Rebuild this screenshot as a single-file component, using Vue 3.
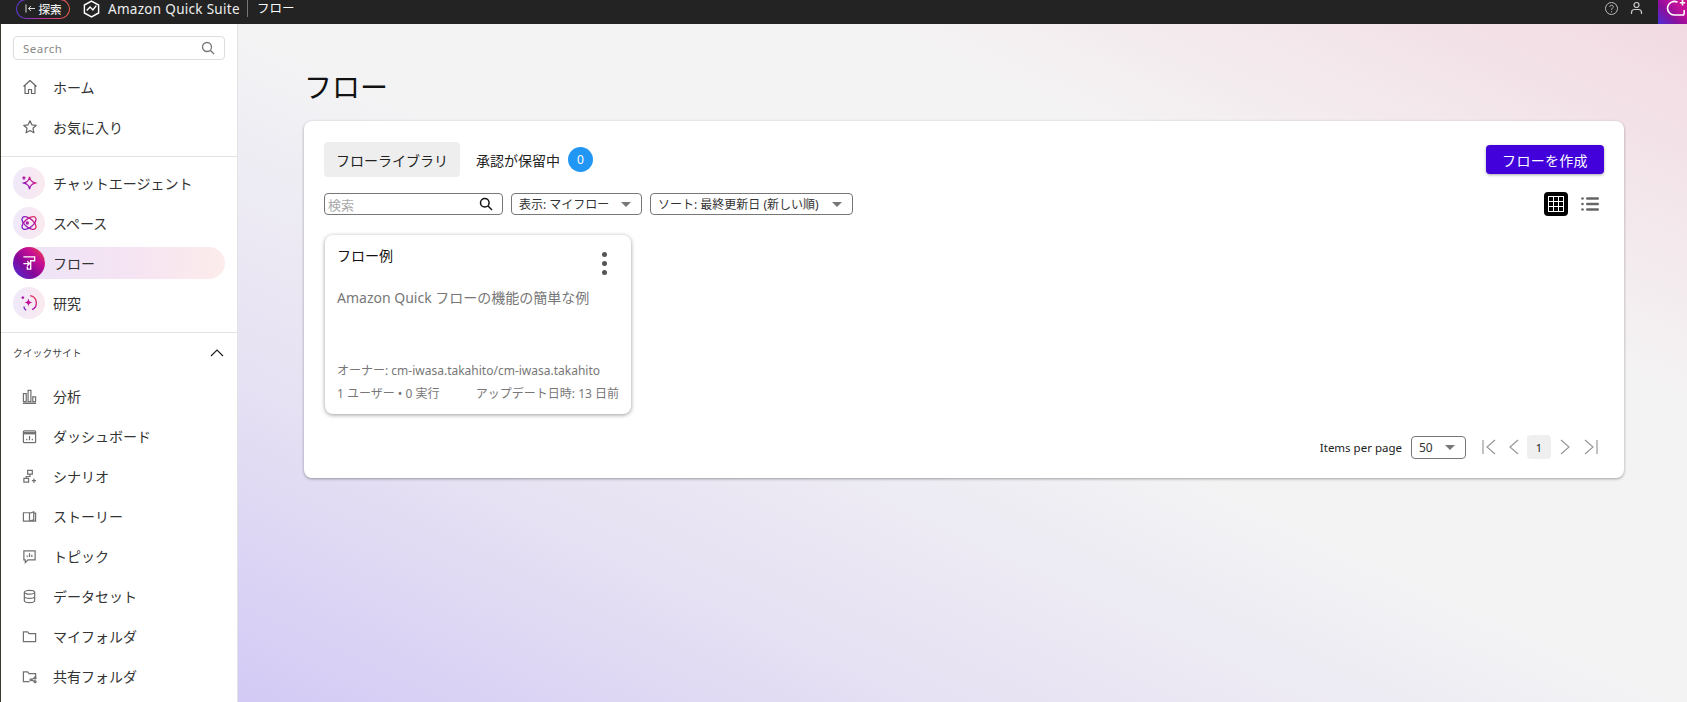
<script setup>
import { ref } from "vue";

const top = ref([
  { label: "ホーム", icon: "home" },
  { label: "お気に入り", icon: "star" },
]);
const agents = ref([
  { label: "チャットエージェント", icon: "chat" },
  { label: "スペース", icon: "space" },
  { label: "フロー", icon: "flow", active: true },
  { label: "研究", icon: "research" },
]);
const quick = ref([
  { label: "分析", icon: "analysis" },
  { label: "ダッシュボード", icon: "dashboard" },
  { label: "シナリオ", icon: "scenario" },
  { label: "ストーリー", icon: "story" },
  { label: "トピック", icon: "topic" },
  { label: "データセット", icon: "dataset" },
  { label: "マイフォルダ", icon: "folder" },
  { label: "共有フォルダ", icon: "shared" },
]);
</script>

<template>
  <div class="page">
    <header class="topbar">
      <button class="explore">
        <svg width="11" height="9" viewBox="0 0 11 9" fill="none" stroke="#ddd" stroke-width="1">
          <path d="M1 0.5v8M10 4.500H3.500M6 2L3.500 4.500L6 7" />
        </svg>
        <span>探索</span>
      </button>
      <svg class="logo" width="19" height="18" viewBox="0 0 19 19" fill="none" stroke="#fff" stroke-width="1.500">
        <path d="M9.500 1.200L17 5.300v8.400l-7.500 4.100L2 13.700V5.300z" />
        <path d="M4.500 11l3.500-3.500 3 3 3.500-4.500" />
      </svg>
      <span class="brand">Amazon Quick Suite</span>
      <span class="crumb">フロー</span>
      <div class="spacer"></div>
      <svg class="top-icon" width="15" height="15" viewBox="0 0 15 15" fill="none" stroke="#bbb" stroke-width="1">
        <circle cx="7.500" cy="7.500" r="6" />
        <path d="M5.800 6c0-2.300 3.500-2.300 3.500-.2 0 1.400-1.800 1.300-1.800 3M7.500 10.300v1" />
      </svg>
      <svg class="top-icon user" width="15" height="15" viewBox="0 0 15 15" fill="none" stroke="#ccc" stroke-width="1.200">
        <circle cx="7.500" cy="4" r="2.500" />
        <path d="M2.500 13v-1.500c0-2 1.500-3 3-3h4c1.500 0 3 1 3 3V13" />
      </svg>
      <div class="assistant">
        <svg width="21" height="18" viewBox="0 0 21 18" fill="none" stroke="#fff" stroke-width="1.600">
          <path d="M11.500 2.200A6.800 6.800 0 1 0 9 15h8.500" />
          <path d="M17.500 15.500c.8-1.800 1-3.500.6-5.500" />
          <path d="M16.500 0v5.500M13.800 2.700h5.400" />
        </svg>
      </div>
    </header>

    <div class="body">
      <aside class="sidebar">
        <div class="side-search">
          <span>Search</span>
          <svg width="14" height="14" viewBox="0 0 14 14" fill="none" stroke="#777" stroke-width="1.300">
            <circle cx="6" cy="6" r="4.500" />
            <path d="M9.300 9.300L13 13" />
          </svg>
        </div>

        <nav class="nav-top">
          <a v-for="item in top" :key="item.label" class="nav-item">
            <span class="nav-icon">
              <svg width="16" height="16" viewBox="0 0 16 16" fill="none" stroke="#666" stroke-width="1.200" stroke-linejoin="round">
                <path v-if="item.icon === 'home'" d="M1.500 7.500L8 1.500l6.500 6M3 6.500v8h3.500v-4h3v4H13v-8" />
                <path v-else d="M8 1.800l1.900 4 4.400.5-3.300 3 .9 4.400L8 11.500l-3.900 2.200.9-4.400-3.300-3 4.400-.5z" />
              </svg>
            </span>
            <span>{{ item.label }}</span>
          </a>
        </nav>

        <nav class="nav-agents">
          <a v-for="item in agents" :key="item.label" class="agent-item" :class="{ active: item.active }">
            <span class="agent-icon">
              <svg width="18" height="18" viewBox="0 0 16 16" fill="none" :stroke="item.active ? '#fff' : 'url(#iconGrad)'" stroke-width="1.200">
                <defs>
                  <linearGradient id="iconGrad" gradientUnits="userSpaceOnUse" x1="1" y1="15" x2="15" y2="1">
                    <stop offset="0" stop-color="#5a2be0" />
                    <stop offset="0.6" stop-color="#c0109a" />
                    <stop offset="1" stop-color="#f0553a" />
                  </linearGradient>
                </defs>
                <template v-if="item.icon === 'chat'">
                  <path d="M8.500 2.500c.6 3.400 1.700 4.500 5 5.500-3.300 1-4.400 2.100-5 5.500-.6-3.400-1.700-4.500-5-5.500 3.300-1 4.400-2.100 5-5.500z" />
                  <path d="M3.500 2v3M2 3.500h3" />
                </template>
                <template v-else-if="item.icon === 'space'">
                  <ellipse cx="8" cy="8" rx="7.500" ry="3.800" transform="rotate(40 8 8)" />
                  <ellipse cx="8" cy="8" rx="7.500" ry="3.800" transform="rotate(-40 8 8)" />
                  <circle cx="6.500" cy="8" r="0.900" />
                </template>
                <template v-else-if="item.icon === 'flow'">
                  <path d="M3 2.500h10v3.500H9.500v7.500h-3V11" />
                  <path d="M3 8.500h5.500M6.500 6.500l2 2-2 2" />
                </template>
                <template v-else>
                  <path d="M9 1.500a6.500 6.500 0 0 1 1.800 12.300" />
                  <path d="M5.500 14.500c-1.200-.8-2-2-2-3.500" />
                  <path d="M7.500 4c.4 2.200 1.100 3 3.500 3.500-2.400.5-3.100 1.300-3.500 3.500-.4-2.200-1.100-3-3.500-3.500 2.400-.5 3.100-1.300 3.500-3.500z" fill="#c0109a" stroke="none" />
                  <path d="M2.500 2v2.500M1.300 3.200h2.400" />
                </template>
              </svg>
            </span>
            <span class="agent-label">{{ item.label }}</span>
          </a>
        </nav>

        <div class="quick-head">
          <span>クイックサイト</span>
          <svg width="14" height="8" viewBox="0 0 14 8" fill="none" stroke="#222" stroke-width="1.200">
            <path d="M1 7l6-6 6 6" />
          </svg>
        </div>

        <nav class="nav-quick">
          <a v-for="item in quick" :key="item.label" class="nav-item">
            <span class="nav-icon">
              <svg width="15" height="15" viewBox="0 0 16 16" fill="none" stroke="#707070" stroke-width="1.300">
                <template v-if="item.icon === 'analysis'">
                  <path d="M1.500 5h3v8.500h-3zM6.500 1.500h3v12h-3zM11.500 8.500h3v5h-3z" />
                  <path d="M1 15.200h14" stroke-width="1.600" />
                </template>
                <template v-else-if="item.icon === 'dashboard'">
                  <rect x="1.500" y="2" width="13" height="12.500" rx="1" />
                  <path d="M1.500 4.500h13" stroke-width="2.500" />
                  <path d="M5 12v-1.500M8 12V7.500M11 12v-1.500" />
                </template>
                <template v-else-if="item.icon === 'scenario'">
                  <path d="M6 1.500h5v4H6zM2 10h5v4H2zM8.500 5.500V8H4.500v2M10.500 12.500h4.500M12.700 10v5" />
                </template>
                <template v-else-if="item.icon === 'story'">
                  <path d="M8 4H1.500v9H8zM8 13l4.500-1.500V3L8 4.500M12.500 4.500h2V13H9" />
                </template>
                <template v-else-if="item.icon === 'topic'">
                  <path d="M2 2h12v9.500H6.500L3.500 14.500v-3H2z" />
                  <path d="M5.500 8.500V7M8 8.500V4.500M10.500 8.500V6" />
                </template>
                <template v-else-if="item.icon === 'dataset'">
                  <ellipse cx="8" cy="3.500" rx="5.500" ry="2" />
                  <path d="M2.500 3.500v9c0 1.100 2.500 2 5.500 2s5.500-.9 5.500-2v-9M2.500 8c0 1.100 2.500 2 5.500 2s5.500-.9 5.500-2" />
                </template>
                <template v-else-if="item.icon === 'folder'">
                  <path d="M1.500 3h4.500l1.500 2h7v8.500h-13z" />
                </template>
                <template v-else>
                  <path d="M8 13.500H1.500V3H6l1.500 2h7v4" />
                  <circle cx="9.500" cy="11.500" r="1" />
                  <circle cx="14" cy="9.500" r="1" />
                  <circle cx="14" cy="13.500" r="1" />
                  <path d="M10.500 11l2.500-1.200M10.500 12l2.500 1.200" />
                </template>
              </svg>
            </span>
            <span>{{ item.label }}</span>
          </a>
        </nav>
      </aside>

      <main class="main">
        <h1>フロー</h1>

        <section class="panel">
          <div class="tabs-row">
            <button class="tab selected">フローライブラリ</button>
            <div class="tab pending">
              <span>承認が保留中</span>
              <span class="badge">0</span>
            </div>
            <div class="spacer"></div>
            <button class="create">フローを作成</button>
          </div>

          <div class="filter-row">
            <div class="search">
              <span>検索</span>
              <svg width="14" height="14" viewBox="0 0 14 14" fill="none" stroke="#111" stroke-width="1.500">
                <circle cx="5.800" cy="5.800" r="4.300" />
                <path d="M9 9l4 4" />
              </svg>
            </div>
            <div class="select view">
              <span>表示: マイフロー</span>
              <i class="caret"></i>
            </div>
            <div class="select sort">
              <span>ソート: 最終更新日 (新しい順)</span>
              <i class="caret"></i>
            </div>
            <div class="spacer"></div>
            <div class="grid-toggle">
              <span class="grid-cells">
                <i v-for="n in 9" :key="n"></i>
              </span>
            </div>
            <svg class="list-toggle" width="18" height="16" viewBox="0 0 18 16" fill="#666">
              <circle cx="1.500" cy="2.500" r="1.300" />
              <circle cx="1.500" cy="8" r="1.300" />
              <circle cx="1.500" cy="13.500" r="1.300" />
              <rect x="5" y="1.300" width="13" height="2.400" rx="1.200" />
              <rect x="5" y="6.800" width="13" height="2.400" rx="1.200" />
              <rect x="5" y="12.300" width="13" height="2.400" rx="1.200" />
            </svg>
          </div>

          <article class="flow-card">
            <div class="card-head">
              <span class="card-title">フロー例</span>
              <span class="dots"><i></i><i></i><i></i></span>
            </div>
            <p class="card-desc">Amazon Quick フローの機能の簡単な例</p>
            <p class="card-owner">オーナー: cm-iwasa.takahito/cm-iwasa.takahito</p>
            <div class="card-foot">
              <span>1 ユーザー • 0 実行</span>
              <span>アップデート日時: 13 日前</span>
            </div>
          </article>

          <div class="pager">
            <span class="per-label">Items per page</span>
            <div class="select per">
              <span>50</span>
              <i class="caret"></i>
            </div>
            <svg class="pg first" width="14" height="16" viewBox="0 0 14 16" fill="none" stroke="#999" stroke-width="1.200">
              <path d="M1 1v14M13 1L5 8l8 7" />
            </svg>
            <svg class="pg prev" width="10" height="16" viewBox="0 0 10 16" fill="none" stroke="#999" stroke-width="1.200">
              <path d="M9 1L1 8l8 7" />
            </svg>
            <span class="page-no">1</span>
            <svg class="pg next" width="10" height="16" viewBox="0 0 10 16" fill="none" stroke="#999" stroke-width="1.200">
              <path d="M1 1l8 7-8 7" />
            </svg>
            <svg class="pg last" width="14" height="16" viewBox="0 0 14 16" fill="none" stroke="#999" stroke-width="1.200">
              <path d="M13 1v14M1 1l8 7-8 7" />
            </svg>
          </div>
        </section>
      </main>
    </div>
  </div>
</template>

<style>
html,
body {
  margin: 0;
  overflow: hidden;
}
</style>

<style scoped>
.page {
  width: 1687px;
  height: 702px;
  display: flex;
  flex-direction: column;
  overflow: hidden;
  font-family: "Noto Sans", "Noto Sans CJK JP", sans-serif;
  color: #222;
}

.spacer {
  flex: 1;
}

.topbar {
  height: 24px;
  box-sizing: border-box;
  padding-bottom: 7px;
  flex: none;
  display: flex;
  align-items: center;
  background: #232323;
  color: #fff;
}

.explore {
  width: 54px;
  height: 20px;
  flex: none;
  margin-left: 16px;
  padding: 0;
  display: flex;
  align-items: center;
  justify-content: center;
  gap: 3px;
  background:
    linear-gradient(#232323, #232323) padding-box,
    linear-gradient(90deg, #5a3be0, #c0309a, #f0604a) border-box;
  border: 1px solid transparent;
  border-radius: 10px;
  color: #eee;
  font: 500 11.500px "Noto Sans", "Noto Sans CJK JP", sans-serif;
}

.logo {
  margin-left: 12px;
}

.brand {
  margin-left: 7px;
  font-size: 13.500px;
  letter-spacing: 0.300px;
  color: #eee;
}

.crumb {
  margin-left: 7px;
  padding-left: 9px;
  border-left: 1px solid #777;
  font-size: 12.500px;
  line-height: 17px;
}

.top-icon {
  margin-right: 10px;
}

.top-icon.user {
  margin-right: 14px;
}

.assistant {
  width: 29px;
  height: 24px;
  align-self: flex-start;
  display: flex;
  justify-content: flex-end;
  overflow: hidden;
  background: linear-gradient(45deg, #4b30d8 0%, #8a0f9c 40%, #c0109a 70%, #d0108a 100%);
}

.body {
  flex: 1;
  display: flex;
  min-height: 0;
}

.sidebar {
  width: 238px;
  box-sizing: border-box;
  flex: none;
  overflow: hidden;
  background: #fff;
  border-left: 1px solid #3a3a30;
  border-right: 1px solid #e3e3e3;
}

.side-search {
  height: 22px;
  margin: 12px 12px 0;
  padding: 0 9px;
  display: flex;
  align-items: center;
  justify-content: space-between;
  border: 1px solid #ddd;
  border-radius: 4px;
  font-size: 11.500px;
  letter-spacing: 0.500px;
  color: #888;
}

.nav-top {
  padding: 7px 0 9px;
  border-bottom: 1px solid #e3e3e3;
}

.nav-item {
  height: 40px;
  display: flex;
  align-items: center;
  font-size: 14px;
  color: #333;
}

.nav-icon {
  width: 52px;
  padding-left: 21px;
  box-sizing: border-box;
  display: flex;
  flex: none;
}

.nav-agents {
  padding: 10px 12px 13px;
  border-bottom: 1px solid #e3e3e3;
}

.agent-item {
  height: 32px;
  margin-bottom: 8px;
  display: flex;
  align-items: center;
  border-radius: 16px;
  font-size: 14px;
  color: #333;
}

.agent-item:last-child {
  margin-bottom: 0;
}

.agent-item.active {
  background: linear-gradient(90deg, #ece4f8, #f6e4f2 60%, #fdeceb);
}

.agent-icon {
  width: 32px;
  height: 32px;
  flex: none;
  display: flex;
  align-items: center;
  justify-content: center;
  border-radius: 50%;
  background: linear-gradient(90deg, #efe9f9, #fbe9ef);
}

.active .agent-icon {
  background: linear-gradient(45deg, #4b30d8 0%, #85089a 40%, #c80f92 70%, #f0503a 100%);
}

.agent-label {
  margin-left: 8px;
}

.quick-head {
  height: 40px;
  padding: 0 13px 0 12px;
  display: flex;
  align-items: center;
  justify-content: space-between;
  font-size: 9.800px;
  color: #444;
}

.nav-quick {
  padding-top: 3px;
}

.main {
  flex: 1;
  min-width: 0;
  padding: 0 63px 0 66px;
  background: linear-gradient(25deg, #d3caf5 0%, #e6e1f3 24%, #f3f3f4 50%, #f4f3f3 72%, #f2dae2 100%);
}

h1 {
  margin: 46px 0 16px;
  font-size: 28px;
  font-weight: 400;
  line-height: 35px;
  color: #111;
}

.panel {
  height: 357px;
  box-sizing: border-box;
  padding: 21px 20px 0;
  background: #fff;
  border-radius: 8px;
  box-shadow: 0 1px 3px rgba(0, 0, 0, 0.35);
}

.tabs-row {
  height: 35px;
  display: flex;
  align-items: center;
}

.tab {
  height: 35px;
  padding: 0 12px;
  box-sizing: border-box;
  display: flex;
  align-items: center;
  border: 0;
  border-radius: 4px;
  background: none;
  color: #222;
  font: 400 14px "Noto Sans", "Noto Sans CJK JP", sans-serif;
}

.tab.selected {
  width: 136px;
  background: #eee;
}

.tab.pending {
  margin-left: 4px;
  gap: 8px;
}

.badge {
  width: 25px;
  height: 25px;
  display: flex;
  align-items: center;
  justify-content: center;
  border-radius: 50%;
  background: #2196f3;
  color: #fff;
  font-size: 12px;
}

.create {
  width: 118px;
  height: 29px;
  padding: 0;
  border: 0;
  border-radius: 4px;
  background: #4200da;
  color: #fff;
  font: 400 14px "Noto Sans", "Noto Sans CJK JP", sans-serif;
  letter-spacing: 0.300px;
  box-shadow: 0 1px 3px rgba(0, 0, 0, 0.35);
}

.filter-row {
  height: 24px;
  margin-top: 15px;
  display: flex;
  align-items: center;
  gap: 8px;
}

.search {
  width: 179px;
  height: 22px;
  box-sizing: border-box;
  padding: 0 9px 0 3px;
  display: flex;
  align-items: center;
  justify-content: space-between;
  border: 1px solid #777;
  border-radius: 4px;
  font-size: 13px;
  color: #aaa;
}

.select {
  height: 22px;
  box-sizing: border-box;
  padding: 0 10px 0 7px;
  display: flex;
  align-items: center;
  justify-content: space-between;
  border: 1px solid #777;
  border-radius: 4px;
  font-size: 12px;
  color: #333;
}

.select.view {
  width: 131px;
}

.select.sort {
  width: 203px;
}

.select.per {
  width: 55px;
  height: 23px;
}

.caret {
  width: 0;
  height: 0;
  border-left: 5.500px solid transparent;
  border-right: 5.500px solid transparent;
  border-top: 5.500px solid #777;
}

.grid-toggle {
  width: 24px;
  height: 24px;
  display: flex;
  align-items: center;
  justify-content: center;
  border-radius: 4px;
  background: #000;
}

.grid-cells {
  width: 16px;
  height: 16px;
  box-sizing: border-box;
  padding: 1px;
  display: grid;
  grid-template-columns: repeat(3, 1fr);
  gap: 1px;
  background: #fff;
}

.grid-cells i {
  background: #000;
}

.list-toggle {
  margin: 0 5px;
}

.flow-card {
  width: 306px;
  height: 179px;
  box-sizing: border-box;
  margin: 19px 0 0 1px;
  padding: 12px 12px 0 12px;
  display: flex;
  flex-direction: column;
  border-radius: 8px;
  box-shadow: 0 1px 4px rgba(0, 0, 0, 0.4);
}

.card-head {
  display: flex;
  justify-content: space-between;
  height: 20px;
}

.card-title {
  font-size: 14px;
  line-height: 18px;
  color: #111;
}

.dots {
  align-self: flex-start;
  display: flex;
  flex-direction: column;
  gap: 4px;
  margin: 5px 12px 0 0;
}

.dots i {
  width: 5px;
  height: 5px;
  flex: none;
  border-radius: 50%;
  background: #555;
}

.card-desc {
  margin: 22px 0 0;
  font-size: 14px;
  line-height: 18px;
  color: #777;
}

.card-owner {
  margin: 56px 0 0;
  font-size: 12px;
  line-height: 16px;
  color: #777;
}

.card-foot {
  margin-top: 7px;
  display: flex;
  justify-content: space-between;
  font-size: 12px;
  line-height: 16px;
  color: #777;
}

.pager {
  margin-top: 21px;
  height: 24px;
  display: flex;
  align-items: center;
  justify-content: flex-end;
  padding-right: 6px;
  font-size: 12px;
}

.per-label {
  margin-right: 9px;
  font-size: 11.500px;
  color: #222;
}

.pg {
  flex: none;
}

.pg.first {
  margin-left: 16px;
}

.pg.prev {
  margin-left: 13px;
}

.page-no {
  width: 24px;
  height: 24px;
  margin: 0 9px 0 8px;
  display: flex;
  align-items: center;
  justify-content: center;
  border-radius: 4px;
  background: #efefef;
  font-size: 11px;
}

.pg.last {
  margin-left: 14px;
}
</style>
